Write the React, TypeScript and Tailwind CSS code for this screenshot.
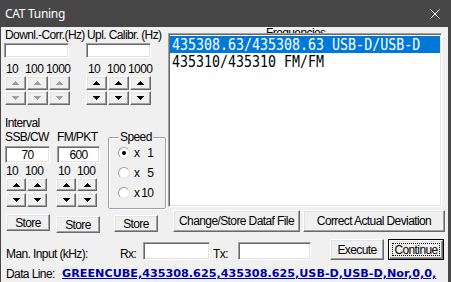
import React from "react";

const sunken =
  "border border-t-[#a0a0a0] border-l-[#a0a0a0] border-r-white border-b-white shadow-[inset_1px_1px_0_#696969,inset_-1px_-1px_0_#e3e3e3] bg-white";
const raised =
  "border border-t-white border-l-white border-r-[#696969] border-b-[#696969] shadow-[inset_-1px_-1px_0_#a0a0a0,inset_1px_1px_0_#e3e3e3] bg-[#f0f0f0]";

function Arrow({ up, disabled }: { up: boolean; disabled?: boolean }) {
  return (
    <svg width="7" height="4" viewBox="0 0 7 4" shapeRendering="crispEdges">
      <polygon
        points={up ? "0,4 7,4 3.5,0" : "0,0 7,0 3.5,4"}
        fill={disabled ? "#a0a0a0" : "#000"}
      />
    </svg>
  );
}

function SpinBtn({ up, disabled, className }: { up: boolean; disabled?: boolean; className: string }) {
  return (
    <div className={`${raised} ${className} flex items-center justify-center`}>
      <Arrow up={up} disabled={disabled} />
    </div>
  );
}

function Button({ children, className }: { children: React.ReactNode; className: string }) {
  return <div className={`${raised} ${className} flex items-center justify-center`}>{children}</div>;
}

function CorrGroup({ label, disabled, btnMl }: { label: string; disabled?: boolean; btnMl: string }) {
  return (
    <div className="w-[88px] flex flex-col">
      <div className="h-[14px] pl-[1px] whitespace-nowrap">{label}</div>
      <div className={`mt-[1px] w-[65px] h-[15px] ${sunken}`} />
      <div className="mt-[4px] h-[14px] pl-[2px] flex whitespace-nowrap">
        <span className="w-[19px]">10</span>
        <span className="w-[21px]">100</span>
        <span>1000</span>
      </div>
      <div className={`${btnMl} flex flex-col gap-[1px]`}>
        <div className="flex gap-[1px]">
          {[0, 1, 2].map((i) => (
            <SpinBtn key={i} up disabled={disabled} className="w-[21px] h-[14px]" />
          ))}
        </div>
        <div className="flex gap-[1px]">
          {[0, 1, 2].map((i) => (
            <SpinBtn key={i} up={false} disabled={disabled} className="w-[21px] h-[14px]" />
          ))}
        </div>
      </div>
    </div>
  );
}

function IntervalCol({ label, value, inputW, colW, btnMl }: { label: string; value: string; inputW: string; colW: string; btnMl: string }) {
  return (
    <div className={`${colW} flex flex-col`}>
      <div className="h-[14px] whitespace-nowrap">{label}</div>
      <div className={`mt-[2px] ${inputW} h-[17px] ${sunken} flex items-center justify-center`}>{value}</div>
      <div className="mt-[1px] h-[14px] pl-[1px] flex whitespace-nowrap">
        <span className="w-[19px]">10</span>
        <span>100</span>
      </div>
      <div className={`${btnMl} flex flex-col`}>
        <div className="flex gap-[1px]">
          <SpinBtn up className="w-[20px] h-[13px]" />
          <SpinBtn up className="w-[20px] h-[13px]" />
        </div>
        <div className="mt-[2px] flex gap-[1px]">
          <SpinBtn up={false} className="w-[20px] h-[14px]" />
          <SpinBtn up={false} className="w-[20px] h-[14px]" />
        </div>
      </div>
    </div>
  );
}

function Radio({ checked, num }: { checked?: boolean; num: string }) {
  return (
    <div className="h-[20px] flex items-center">
      <div className="w-[12px] h-[12px] rounded-full border border-t-[#a0a0a0] border-l-[#a0a0a0] border-r-[#e3e3e3] border-b-[#e3e3e3] bg-white flex items-center justify-center">
        {checked && <div className="w-[4px] h-[4px] rounded-full bg-black" />}
      </div>
      <span className="ml-[4px]">x</span>
      <span className="w-[14px] text-right">{num}</span>
    </div>
  );
}

const entries = [
  { text: "435308.63/435308.63 USB-D/USB-D", selected: true },
  { text: "435310/435310 FM/FM", selected: false },
];

export default function App() {
  return (
    <div className="w-[451px] h-[282px] bg-[#474747] flex flex-col overflow-hidden font-['Liberation_Sans',Arial,sans-serif] text-[12px] leading-[14px] tracking-[-0.6px] text-black">
      <div className="h-[27px] shrink-0 flex items-center pl-[5px] pr-[11px] text-white font-['Noto_Sans',sans-serif] text-[12px] tracking-[-0.3px]">
        <span>CAT Tuning</span>
        <svg className="ml-auto" width="10" height="10" viewBox="0 0 10 10">
          <path d="M0.5 0.5 L9.5 9.5 M9.5 0.5 L0.5 9.5" stroke="#fff" strokeWidth="1" />
        </svg>
      </div>

      <div className="flex-1 ml-[1px] mr-[3px] bg-[#f0f0f0] flex flex-col">
        {/* upper part */}
        <div className="h-[183px] flex">
          <div className="w-[167px] flex flex-col">
            <div className="flex pl-[3px] pt-[1px]">
              <CorrGroup label="Downl.-Corr.(Hz)" disabled btnMl="ml-[1px]" />
              <CorrGroup label="Upl. Calibr. (Hz)" btnMl="ml-0" />
            </div>
            <div className="mt-[11px] pl-[4px] h-[14px]">Interval</div>
            <div className="flex pl-[4px]">
              <IntervalCol label="SSB/CW" value="70" inputW="w-[45px]" colW="w-[52px]" btnMl="ml-[1px]" />
              <IntervalCol label="FM/PKT" value="600" inputW="w-[43px]" colW="w-[51px]" btnMl="-ml-[1px]" />
              <div className="relative mt-[7px] w-[58px] h-[72px] border border-[#a0a0a0] rounded-[2px] shadow-[inset_1px_1px_0_white,1px_1px_0_white] pt-[5px] pl-[9px]">
                <span className="absolute -top-[8px] left-[10px] px-[1px] bg-[#f0f0f0] leading-[14px]">Speed</span>
                <Radio checked num="1" />
                <Radio num="5" />
                <Radio num="10" />
              </div>
            </div>
          </div>

          <div className="w-[274px] flex flex-col">
            <div className="h-[6px] overflow-hidden pl-[98px]">
              <div className="-mt-[1px]">Frequencies</div>
            </div>
            <div className={`h-[174px] ${sunken} pt-[2px] px-[1px] font-['DejaVu_Sans_Mono',monospace] text-[13.3px] tracking-[0px]`}>
              {entries.map((e) => (
                <div
                  key={e.text}
                  className={`h-[17px] pl-[2px] flex items-center whitespace-pre ${e.selected ? "bg-[#0078d7] text-white" : "text-black"}`}
                >
                  <span className="inline-block scale-y-[1.22]">{e.text}</span>
                </div>
              ))}
            </div>
          </div>
        </div>

        {/* store / file buttons */}
        <div className="h-[22px] flex items-start">
          <Button className="ml-[5px] mt-[4px] w-[44px] h-[17px]">Store</Button>
          <Button className="ml-[6px] mt-[6px] w-[44px] h-[17px]">Store</Button>
          <Button className="ml-[14px] mt-[5px] w-[44px] h-[17px]">Store</Button>
          <Button className="ml-[15px] w-[127px] h-[22px]">Change/Store Dataf File</Button>
          <Button className="ml-[3px] w-[142px] h-[22px]">Correct Actual Deviation</Button>
        </div>

        {/* manual input */}
        <div className="h-[28px] flex items-start whitespace-nowrap">
          <span className="ml-[5px] mt-[15px] w-[114px]">Man. Input (kHz):</span>
          <span className="mt-[15px] w-[23px]">Rx:</span>
          <div className={`mt-[10px] w-[67px] h-[18px] ${sunken}`} />
          <span className="ml-[3px] mt-[15px] w-[25px]">Tx:</span>
          <div className={`mt-[10px] w-[73px] h-[18px] ${sunken}`} />
          <Button className="ml-[19px] mt-[7px] w-[54px] h-[21px]">Execute</Button>
          <div className="ml-[4px] mt-[7px] w-[56px] h-[21px] border border-black flex">
            <div className={`flex-1 ${raised} flex`}>
              <div className="flex-1 m-[2px] border border-dotted border-black flex items-center justify-center">Continue</div>
            </div>
          </div>
        </div>

        {/* data line */}
        <div className="mt-[7px] h-[14px] flex items-center whitespace-nowrap">
          <span className="ml-[5px] w-[56px]">Data Line:</span>
          <span className="font-['DejaVu_Sans',sans-serif] font-bold text-[11.2px] tracking-[0px] text-[#0000a8] underline">
            GREENCUBE,435308.625,435308.625,USB-D,USB-D,Nor,0,0,
          </span>
        </div>
      </div>
    </div>
  );
}
